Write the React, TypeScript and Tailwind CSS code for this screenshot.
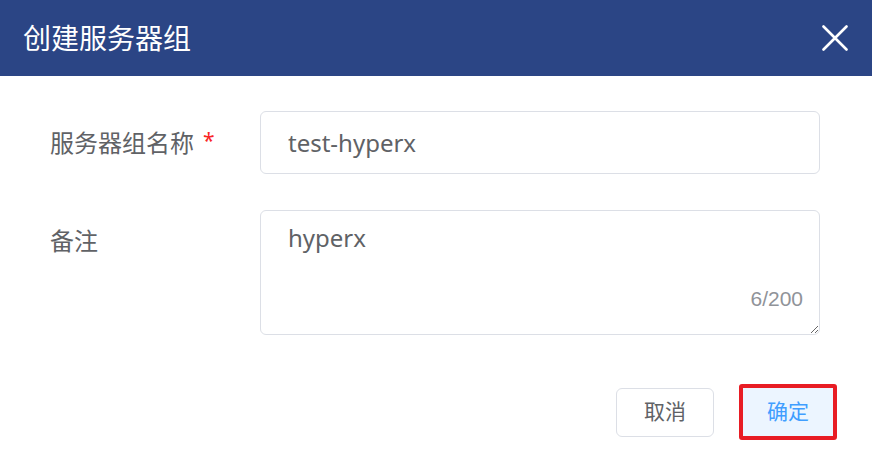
import { useState } from "react";

const FONT = `"Noto Sans", "Noto Sans CJK SC", sans-serif`;

export default function App() {
  const [name, setName] = useState("test-hyperx");
  const [remark, setRemark] = useState("hyperx");

  return (
    <div className="h-[467px] w-[872px] bg-white" style={{ fontFamily: FONT }}>
      <div className="flex h-[76px] items-center justify-between bg-[#2b4585] pl-[23px] pr-[24px]">
        <h1 className="text-[28px] leading-none text-white">创建服务器组</h1>
        <button type="button" aria-label="关闭" className="flex h-[26px] w-[26px] items-center justify-center">
          <svg width="26" height="26" viewBox="0 0 26 26" fill="none" stroke="white" strokeWidth="2.6" strokeLinecap="round">
            <path d="M1.5 1.5 L24.5 24.5 M24.5 1.5 L1.5 24.5" />
          </svg>
        </button>
      </div>

      <form className="flex flex-col gap-[36px] pl-[50px] pr-[52px] pt-[35px]" onSubmit={(e) => e.preventDefault()}>
        <div className="flex items-center">
          <label htmlFor="group-name" className="w-[210px] shrink-0 text-[24px] leading-none text-[#606266]">
            服务器组名称
            <span className="relative -top-[4px] ml-[9px] text-[21px] text-[#f92525]">*</span>
          </label>
          <input
            id="group-name"
            value={name}
            onChange={(e) => setName(e.target.value)}
            className="h-[63px] flex-1 rounded-[6px] border border-[#dcdfe6] px-[27px] text-[24px] text-[#606266] outline-none"
          />
        </div>

        <div className="flex items-start">
          <label htmlFor="group-remark" className="w-[210px] shrink-0 pt-[19px] text-[24px] leading-none text-[#606266]">
            备注
          </label>
          <div className="relative flex-1">
            <textarea
              id="group-remark"
              value={remark}
              maxLength={200}
              onChange={(e) => setRemark(e.target.value)}
              className="block h-[125px] w-full resize-y rounded-[6px] border border-[#dcdfe6] px-[27px] pt-[9px] text-[24px] leading-[36px] text-[#606266] outline-none"
            />
            <span className="absolute bottom-[26px] right-[17px] text-[21px] leading-none text-[#909399]" style={{ fontFamily: `"Liberation Sans", sans-serif` }}>
              {remark.length}/200
            </span>
          </div>
        </div>

        <div className="mt-[13px] flex items-center justify-end gap-[25px]">
          <button
            type="button"
            className="h-[49px] w-[98px] rounded-[6px] border border-[#dcdfe6] bg-white text-[21px] text-[#606266]"
          >
            取消
          </button>
          <button
            type="submit"
            className="-mr-[17px] h-[56px] w-[98px] rounded-[3px] border-[4px] border-[#e81c24] bg-[#ecf5ff] text-[21px] text-[#409eff]"
          >
            确定
          </button>
        </div>
      </form>
    </div>
  );
}
